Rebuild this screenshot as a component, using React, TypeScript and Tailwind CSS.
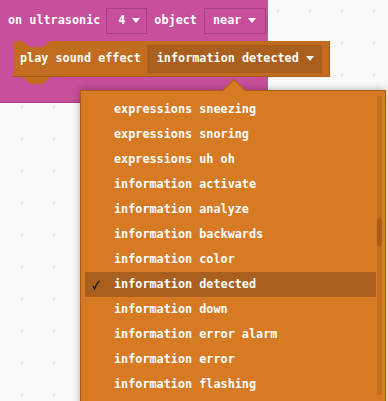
import React from 'react';

const items = [
    'expressions sneezing',
    'expressions snoring',
    'expressions uh oh',
    'information activate',
    'information analyze',
    'information backwards',
    'information color',
    'information detected',
    'information down',
    'information error alarm',
    'information error',
    'information flashing',
];

const selected = 'information detected';

const Caret = () => (
    <svg width="8" height="5" viewBox="0 0 8 5" className="ml-[7px]">
        <path d="M0 0 H8 L4 5 Z" fill="#ffffff" />
    </svg>
);

const Check = () => (
    <svg width="8" height="10" viewBox="0 0 8 10">
        <path d="M0.8 5.8 L2.6 9 Q4 4 7.5 0.8" fill="none" stroke="#1a1a1a" strokeWidth="1.3" />
    </svg>
);

const Grid = () => (
    <svg className="absolute inset-0" width="388" height="401">
        <defs>
            <pattern id="dots" x="6" y="-5" width="32" height="32" patternUnits="userSpaceOnUse">
                <path d="M14.5 16 H17.5 M16 14.5 V17.5" stroke="#e0e0e0" strokeWidth="1" />
            </pattern>
        </defs>
        <rect width="388" height="401" fill="url(#dots)" />
    </svg>
);

export default function App() {
    return (
        <div
            className="relative h-[401px] w-[388px] overflow-hidden bg-[#f9f9f9] text-white"
            style={{ fontFamily: '"DejaVu Sans Mono", "Liberation Mono", monospace' }}
        >
            <Grid />

            {/* event block */}
            <div className="absolute left-0 top-0 text-[11.8px] font-bold">
                <div className="flex h-[41px] w-[268px] items-center bg-[#c74f9b] pl-2">
                    <span>on ultrasonic</span>
                    <div className="ml-[6px] flex h-[26px] w-[41px] items-center border border-[#a93f83] bg-[#c74f9b] pl-[11px]">
                        <span>4</span>
                        <Caret />
                    </div>
                    <span className="ml-[7px]">object</span>
                    <div className="ml-[7px] flex h-[26px] w-[62px] items-center border border-[#a93f83] bg-[#c74f9b] pl-[8px]">
                        <span>near</span>
                        <Caret />
                    </div>
                </div>

                <div className="flex">
                    <div className="w-[13px] bg-[#c74f9b]" />
                    <div className="relative flex h-[36px] w-[317px] items-center border-b border-r border-[#a85b18] bg-[#c26c1f] pl-[7px]">
                        <div className="absolute left-[10px] top-0 h-[6px] w-[27px] bg-[#c74f9b] [clip-path:polygon(0_0,100%_0,75%_100%,25%_100%)]" />
                        <div className="absolute -bottom-[8px] left-[10px] h-[7px] w-[27px] bg-[#c26c1f] [clip-path:polygon(0_0,100%_0,75%_100%,25%_100%)]" />
                        <span>play sound effect</span>
                        <div className="ml-[6px] flex h-[28px] w-[175px] items-center bg-[#aa5f1e] pl-[10px]">
                            <span>information detected</span>
                            <Caret />
                        </div>
                    </div>
                </div>

                <div className="h-[26px] w-[268px] border-b border-[#a93f83] bg-[#c74f9b]" />
            </div>

            {/* dropdown menu */}
            <div className="absolute left-[226px] top-[82px] z-20 h-4 w-4 rotate-45 border-l border-t border-[#a85b18] bg-[#d67a24]" />
            <div className="absolute left-[80px] top-[90px] z-10 h-[320px] w-[306px] border border-[#a85b18] bg-[#d67a24] pl-[4px] pt-[6px] text-[11.8px] font-bold shadow-[0_0_8px_rgba(0,0,0,0.3)]">
                <div className="flex">
                    <div className="flex w-[291px] flex-col">
                        {items.map(item => (
                            <div
                                key={item}
                                className={`flex h-[25px] items-center ${item === selected ? 'bg-[#aa5f1e]' : ''}`}
                            >
                                <span className="flex w-[29px] pl-[7px]">
                                    {item === selected && <Check />}
                                </span>
                                <span>{item}</span>
                            </div>
                        ))}
                    </div>
                    <div className="relative ml-[1px] -mt-[1px] h-[299px] w-[5px] bg-[#c56e20]">
                        <div className="absolute left-0 top-[122px] h-[28px] w-[5px] rounded-sm bg-[#a85b1b]" />
                    </div>
                </div>
            </div>
        </div>
    );
}
